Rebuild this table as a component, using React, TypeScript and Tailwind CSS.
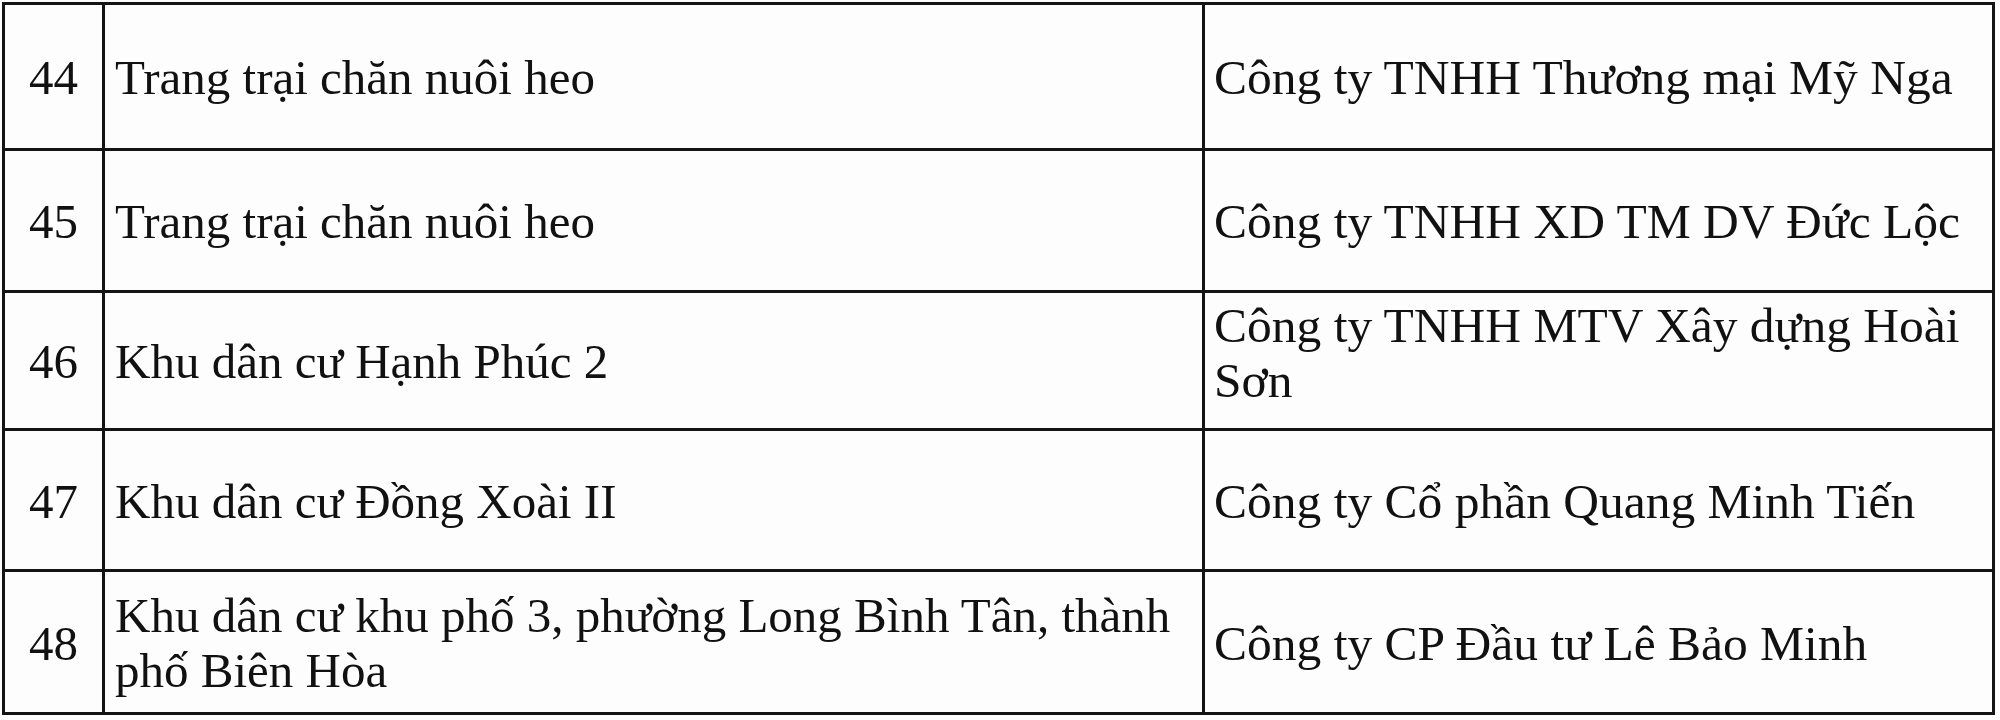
const rows: { no: string; project: string[]; owner: string[]; h: string; ownerAlign?: string }[] = [
  { no: '44', project: ['Trang trại chăn nuôi heo'], owner: ['Công ty TNHH Thương mại Mỹ Nga'], h: 'h-[143px]' },
  { no: '45', project: ['Trang trại chăn nuôi heo'], owner: ['Công ty TNHH XD TM DV Đức Lộc'], h: 'h-[139px]' },
  {
    no: '46',
    project: ['Khu dân cư Hạnh Phúc 2'],
    owner: ['Công ty TNHH MTV Xây dựng Hoài', 'Sơn'],
    h: 'h-[135px]',
    ownerAlign: 'items-start pt-[5px]',
  },
  { no: '47', project: ['Khu dân cư Đồng Xoài II'], owner: ['Công ty Cổ phần Quang Minh Tiến'], h: 'h-[138px]' },
  {
    no: '48',
    project: ['Khu dân cư khu phố 3, phường Long Bình Tân, thành', 'phố Biên Hòa'],
    owner: ['Công ty CP Đầu tư Lê Bảo Minh'],
    h: 'h-[140px]',
  },
];

function Lines({ lines }: { lines: string[] }) {
  return (
    <div>
      {lines.map((l, i) => (
        <div key={i} className="whitespace-nowrap">
          {l}
        </div>
      ))}
    </div>
  );
}

export default function App() {
  return (
    <div className="w-[2000px] h-[720px] bg-[#fdfdfd] overflow-hidden pt-[2px] pl-[2px]">
      <div
        className="inline-grid grid-cols-[97px_1097px_787px] gap-[3px] p-[3px] bg-[#141414] leading-[55px] text-[#111]"
        style={{ fontFamily: '"Liberation Serif", "Times New Roman", serif' }}
      >
        {rows.map((r) => (
          <div key={r.no} className="contents">
            {/* số thứ tự */}
            <div className={`${r.h} bg-[#fdfdfd] flex items-center justify-center text-[49px] pt-[2px]`}>{r.no}</div>
            {/* tên dự án */}
            <div className={`${r.h} bg-[#fdfdfd] flex items-center pl-[10px] text-[49px] pt-[2px]`}>
              <Lines lines={r.project} />
            </div>
            {/* chủ đầu tư */}
            <div className={`${r.h} bg-[#fdfdfd] flex pl-[9px] text-[49.5px] ${r.ownerAlign ?? 'items-center pt-[2px]'}`}>
              <Lines lines={r.owner} />
            </div>
          </div>
        ))}
      </div>
    </div>
  );
}
